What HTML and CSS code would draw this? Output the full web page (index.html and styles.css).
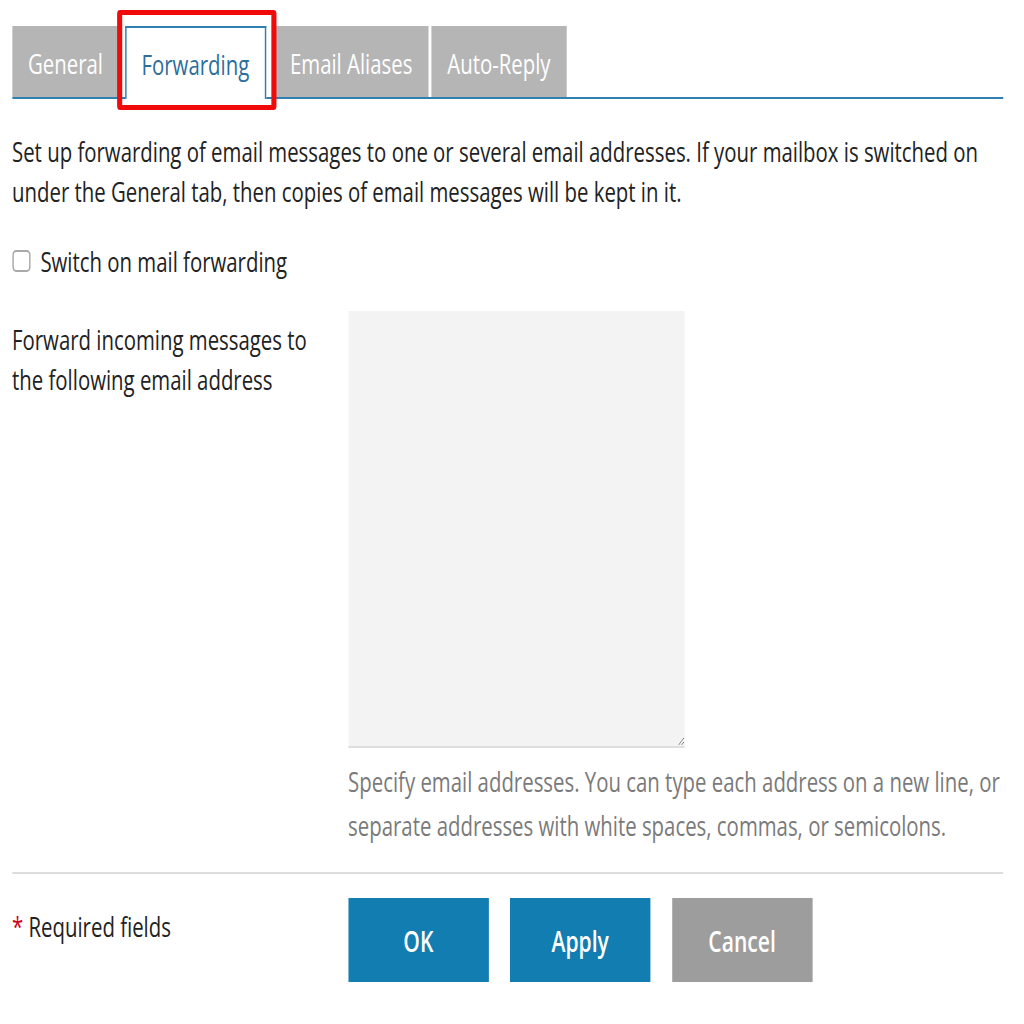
FILE: index.html
```html
<!DOCTYPE html>
<html lang="en">
<head>
<meta charset="utf-8">
<title>Mail settings - Forwarding</title>
<link rel="stylesheet" href="styles.css">
</head>
<body>
<div class="viewport">
<div class="page">
  <div class="tabs">
    <a class="tab">General</a>
    <a class="tab active">Forwarding</a>
    <a class="tab">Email Aliases</a>
    <a class="tab">Auto-Reply</a>
  </div>
  <div class="highlight"></div>

  <p class="intro">Set up forwarding of email messages to one or several email addresses. If your mailbox is switched on under the General tab, then copies of email messages will be kept in it.</p>

  <label class="check-row"><input type="checkbox" class="check"><span>Switch on mail forwarding</span></label>

  <div class="form-row">
    <div class="form-label">Forward incoming messages to the following email address</div>
    <div class="form-field">
      <textarea class="addresses"></textarea>
      <div class="hint">Specify email addresses. You can type each address on a new line, or separate addresses with white spaces, commas, or semicolons.</div>
    </div>
  </div>

  <div class="footer">
    <div class="required"><span class="star">*</span> Required fields</div>
    <div class="buttons">
      <button class="btn primary">OK</button>
      <button class="btn primary">Apply</button>
      <button class="btn secondary">Cancel</button>
    </div>
  </div>
</div>
</div>
</body>
</html>
```

FILE: styles.css
```css
html, body {
  margin: 0;
  padding: 0;
  overflow: hidden;
  background: #ffffff;
}

.viewport {
  width: 1024px;
  height: 1024px;
  overflow: hidden;
}

.page {
  position: relative;
  width: 1408px;
  box-sizing: border-box;
  padding: 26px 29px 0 16.5px;
  transform: scaleX(0.7275);
  transform-origin: 0 0;
  font-family: "Open Sans", "Noto Sans", sans-serif;
  font-size: 28px;
  line-height: 40px;
  color: #222222;
}

.tabs {
  display: flex;
  align-items: flex-end;
  border-bottom: 2px solid #2f7fb1;
  height: 71px;
}

.tab {
  display: block;
  height: 71px;
  box-sizing: border-box;
  padding: 4px 22px 0;
  line-height: 67px;
  margin-right: 4px;
  background: #b5b5b5;
  color: #ffffff;
  font-size: 28px;
}

.tab.active {
  background: #ffffff;
  color: #2c6e9c;
  border: 2px solid #2f7fb1;
  border-bottom: none;
  height: 73px;
  margin-bottom: -2px;
  margin-left: 4px;
  margin-right: 11px;
  padding-top: 3px;
  padding-left: 21px;
  padding-right: 21px;
}

.highlight {
  position: absolute;
  left: 161px;
  top: 10px;
  width: 219px;
  height: 100px;
  box-sizing: border-box;
  border-style: solid;
  border-color: #f00a0a;
  border-width: 5px 7px;
  border-radius: 4px;
}

.intro {
  margin: 32px 0 0;
}

.check-row {
  display: flex;
  align-items: center;
  margin-top: 30px;
  height: 40px;
}

.check {
  appearance: none;
  -webkit-appearance: none;
  width: 25px;
  height: 22px;
  margin: 0 14px 0 0;
  border: 2px solid #a9a9a9;
  border-radius: 5px;
  background: #ffffff;
  box-sizing: border-box;
}

.form-row {
  display: flex;
  margin-top: 30px;
}

.form-label {
  width: 462px;
  flex: none;
  padding-top: 8px;
  padding-right: 40px;
  box-sizing: border-box;
}

.form-field {
  flex: 1;
}

.addresses {
  display: block;
  width: 462px;
  height: 437px;
  box-sizing: border-box;
  margin: 0;
  border: none;
  border-bottom: 2px solid #dedede;
  background: #f3f3f3;
  resize: both;
  font-family: inherit;
}

.hint {
  margin-top: 11px;
  line-height: 44px;
  color: #7a7a7a;
}

.footer {
  display: flex;
  border-top: 2px solid #dddddd;
  margin-top: 25px;
  padding-top: 24px;
}

.required {
  width: 462px;
  flex: none;
  padding-top: 8px;
}

.star {
  color: #d0021b;
}

.buttons {
  display: flex;
  gap: 29.5px;
}

.btn {
  width: 193px;
  height: 84px;
  border: none;
  font-family: inherit;
  font-size: 29px;
  font-weight: 600;
  color: #ffffff;
  padding: 0;
}

.btn.primary {
  background: #117db0;
}

.btn.secondary {
  background: #9d9d9d;
}
```
